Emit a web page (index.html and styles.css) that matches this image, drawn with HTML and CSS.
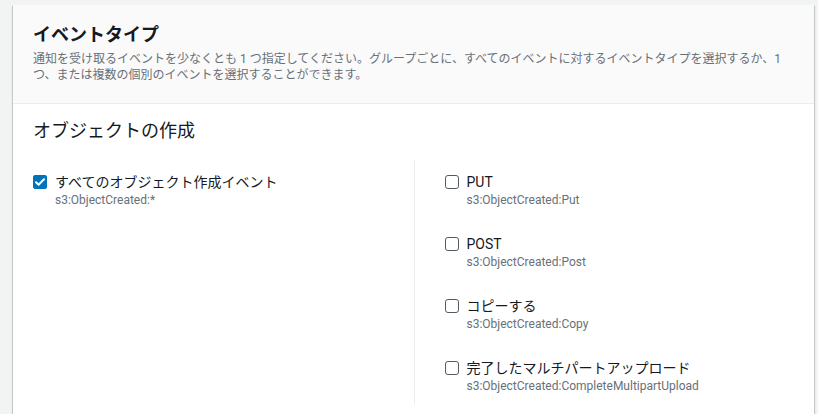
FILE: index.html
```html
<!DOCTYPE html>
<html lang="ja">
<head>
    <meta charset="UTF-8">
    <meta name="viewport" content="width=device-width, initial-scale=1.0">
    <title>イベントタイプ</title>
    <link rel="stylesheet" href="styles.css">
</head>
<body>
    <div class="pagina">
        <div class="painel">
            <!-- Cabeçalho do painel -->
            <div class="painel-cabecalho">
                <h2 class="titulo">イベントタイプ</h2>
                <p class="descricao">通知を受け取るイベントを少なくとも 1 つ指定してください。グループごとに、すべてのイベントに対するイベントタイプを選択するか、1 つ、または複数の個別のイベントを選択することができます。</p>
            </div>

            <!-- Corpo do painel -->
            <div class="painel-corpo">
                <h3 class="subtitulo">オブジェクトの作成</h3>

                <div class="colunas">
                    <div class="coluna">
                        <label class="opcao">
                            <span class="caixa marcada">
                                <svg viewBox="0 0 14 14" width="14" height="14"><path d="M3 7.2l2.6 2.6L11 4.2" fill="none" stroke="#fff" stroke-width="2" stroke-linecap="round" stroke-linejoin="round"/></svg>
                            </span>
                            <span class="textos">
                                <span class="rotulo">すべてのオブジェクト作成イベント</span>
                                <span class="detalhe">s3:ObjectCreated:*</span>
                            </span>
                        </label>
                    </div>

                    <div class="coluna coluna-direita">
                        <label class="opcao">
                            <span class="caixa"></span>
                            <span class="textos">
                                <span class="rotulo">PUT</span>
                                <span class="detalhe">s3:ObjectCreated:Put</span>
                            </span>
                        </label>
                        <label class="opcao">
                            <span class="caixa"></span>
                            <span class="textos">
                                <span class="rotulo">POST</span>
                                <span class="detalhe">s3:ObjectCreated:Post</span>
                            </span>
                        </label>
                        <label class="opcao">
                            <span class="caixa"></span>
                            <span class="textos">
                                <span class="rotulo">コピーする</span>
                                <span class="detalhe">s3:ObjectCreated:Copy</span>
                            </span>
                        </label>
                        <label class="opcao">
                            <span class="caixa"></span>
                            <span class="textos">
                                <span class="rotulo">完了したマルチパートアップロード</span>
                                <span class="detalhe">s3:ObjectCreated:CompleteMultipartUpload</span>
                            </span>
                        </label>
                    </div>
                </div>
            </div>
        </div>
    </div>
</body>
</html>
```

FILE: styles.css
```css
/* Página */
body {
    margin: 0;
    background-color: #f2f3f3;
    font-family: Roboto, "Noto Sans CJK JP", sans-serif;
    color: #16191f;
}

.pagina {
    padding: 5px 4px 0 13px;
}

/* Painel branco */
.painel {
    background-color: #ffffff;
    box-shadow: 0 1px 1px 0 rgba(0, 28, 36, 0.3), 1px 1px 1px 0 rgba(0, 28, 36, 0.15), -1px 1px 1px 0 rgba(0, 28, 36, 0.15);
    min-height: 420px;
}

/* Cabeçalho */
.painel-cabecalho {
    background-color: #fafafa;
    padding: 19px 20px 20px;
    border-bottom: 1px solid #eaeded;
}

.titulo {
    margin: 0;
    font-size: 18px;
    line-height: 22px;
    font-weight: 700;
}

.descricao {
    margin: 5px 0 0;
    font-size: 12px;
    line-height: 16px;
    color: #687078;
}

/* Corpo */
.painel-corpo {
    padding: 16px 20px 0;
}

.subtitulo {
    margin: 0 0 18px;
    font-size: 18px;
    line-height: 22px;
    font-weight: 400;
}

.colunas {
    display: grid;
    grid-template-columns: 1fr 1fr;
}

.coluna {
    display: flex;
    flex-direction: column;
    gap: 26px;
    padding: 12px 0 10px;
}

.coluna-direita {
    border-left: 1px solid #eaeded;
    padding-left: 30px;
}

/* Opções com caixa de seleção */
.opcao {
    display: flex;
    align-items: flex-start;
    gap: 8px;
}

.caixa {
    box-sizing: border-box;
    width: 14px;
    height: 14px;
    margin-top: 3px;
    border: 1px solid #545b64;
    border-radius: 3px;
    flex-shrink: 0;
    display: flex;
}

.caixa.marcada {
    background-color: #0073bb;
    border-color: #0073bb;
    border-radius: 2px;
}

.caixa svg {
    margin: -1px;
}

.textos {
    display: flex;
    flex-direction: column;
}

.rotulo {
    font-size: 14px;
    line-height: 20px;
}

.detalhe {
    font-size: 12px;
    line-height: 16px;
    color: #687078;
}
```
